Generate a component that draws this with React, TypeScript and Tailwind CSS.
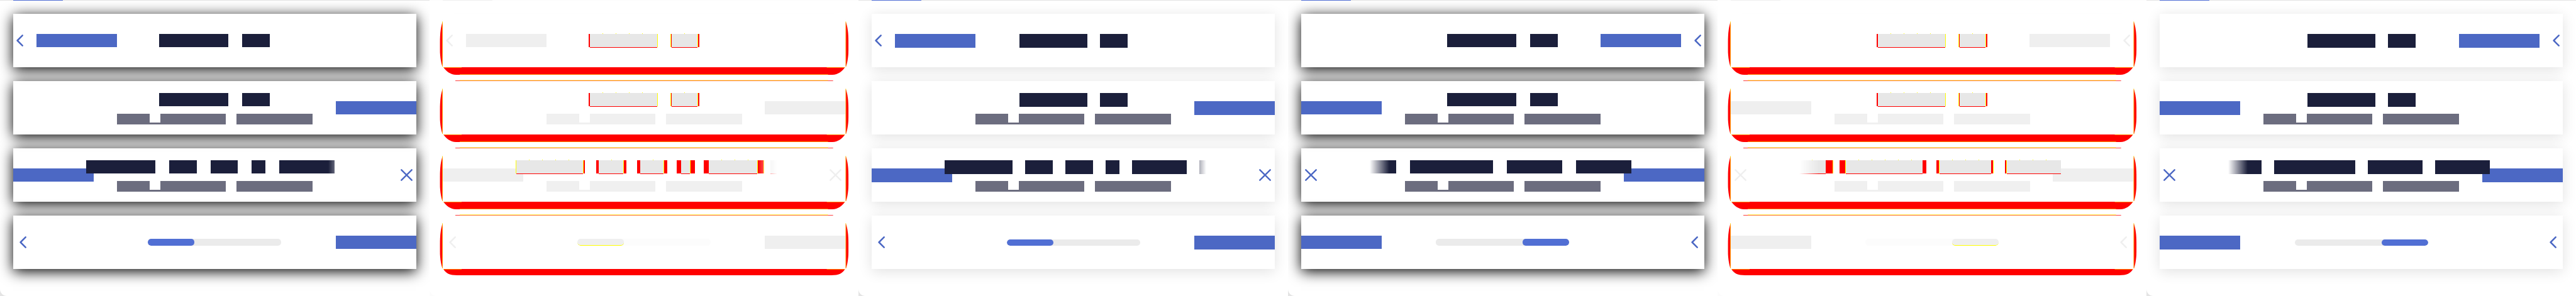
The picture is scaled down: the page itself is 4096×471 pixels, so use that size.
import React from "react";

type Kind = "ink" | "gap" | "red" | "yellow";
type Part = [Kind, number];
type Theme = "strong" | "delta" | "soft";
type Dir = "ltr" | "rtl";

interface Palette {
  ink: string;
  action: string;
  sub: string;
  icon: string;
  fill: string;
  track: string;
  card: string;
  rule: string;
  tab: string;
  corner: string;
}

const palettes: Record<Theme, Palette> = {
  strong: {
    ink: "bg-[#1b1f3b] h-[21px]",
    action: "bg-[#4c68c4] h-[21px]",
    sub: "bg-[#6c6d7f]",
    icon: "text-[#4c68c4]",
    fill: "bg-[#516fd4]",
    track: "bg-[#ebebeb] h-[11px]",
    card: "bg-white/75 shadow-[0_4px_21px_#000000]",
    rule: "bg-[#e4e4e4]",
    tab: "bg-[#516fd4]",
    corner: "bg-[#e4e4e4]",
  },
  delta: {
    ink: "bg-[#e7e7e7] h-[22px] border-b border-[#ff0000]",
    action: "bg-[#efefef] h-[21px]",
    sub: "bg-[#f0f0f0]",
    icon: "text-[#efefef]",
    fill: "bg-[#efefef] border-b border-[#ffff00]",
    track: "bg-[#fcfcfc] h-[11px]",
    card: "bg-white shadow-[0_4px_21px_rgba(0,0,0,0.01)]",
    rule: "bg-[#fcfcfc]",
    tab: "bg-[#efefef]",
    corner: "bg-[#fcfcfc]",
  },
  soft: {
    ink: "bg-[#1b1f3b] h-[22px]",
    action: "bg-[#4c68c4] h-[22px]",
    sub: "bg-[#6c6d7f]",
    icon: "text-[#4c68c4]",
    fill: "bg-[#516fd4]",
    track: "bg-[#ebebeb] h-[10px]",
    card: "bg-white shadow-[0_4px_21px_rgba(0,0,0,0.12)]",
    rule: "bg-[#e4e4e4]",
    tab: "bg-[#516fd4]",
    corner: "bg-[#e4e4e4]",
  },
};

const shortTitle: Record<Theme, Part[]> = {
  strong: [["ink", 110], ["gap", 22], ["ink", 44]],
  delta: [["red", 2], ["ink", 107], ["yellow", 1], ["gap", 20], ["yellow", 1], ["red", 1], ["ink", 41], ["yellow", 1], ["red", 2]],
  soft: [["ink", 108], ["gap", 20], ["ink", 44]],
};

const longTitle: Record<Dir, Record<Theme, Part[]>> = {
  ltr: {
    strong: [["ink", 110], ["gap", 22], ["ink", 44], ["gap", 22], ["ink", 43], ["gap", 22], ["ink", 22], ["gap", 22], ["ink", 88]],
    delta: [
      ["yellow", 1], ["ink", 106], ["yellow", 1], ["red", 2], ["gap", 18],
      ["red", 4], ["ink", 39], ["yellow", 1], ["red", 4], ["gap", 17],
      ["red", 5], ["ink", 37], ["yellow", 1], ["red", 5], ["gap", 15],
      ["red", 7], ["ink", 14], ["yellow", 1], ["red", 7], ["gap", 14],
      ["red", 8], ["ink", 77], ["yellow", 1], ["red", 9], ["yellow", 1], ["gap", 10], ["ink", 11],
    ],
    soft: [["ink", 108], ["gap", 20], ["ink", 44], ["gap", 20], ["ink", 44], ["gap", 20], ["ink", 22], ["gap", 20], ["ink", 87], ["gap", 20], ["ink", 11]],
  },
  rtl: {
    strong: [["ink", 42], ["gap", 22], ["ink", 132], ["gap", 22], ["ink", 88], ["gap", 22], ["ink", 88]],
    delta: [
      ["ink", 42], ["red", 11], ["yellow", 1], ["gap", 10],
      ["red", 9], ["yellow", 1], ["ink", 122], ["red", 6], ["gap", 16],
      ["red", 4], ["yellow", 1], ["ink", 82], ["red", 3], ["yellow", 1], ["gap", 18],
      ["red", 2], ["yellow", 1], ["ink", 86],
    ],
    soft: [["ink", 53], ["gap", 20], ["ink", 129], ["gap", 20], ["ink", 87], ["gap", 20], ["ink", 87]],
  },
};

function Title({ parts, theme }: { parts: Part[]; theme: Theme }) {
  const colors: Record<Kind, string> = {
    ink: palettes[theme].ink,
    gap: "h-[21px]",
    red: "h-[21px] bg-[#ff0000]",
    yellow: "h-[21px] bg-[#ffff00]",
  };
  return (
    <div className="flex items-start">
      {parts.map(([kind, width], i) => (
        <span key={i} className={`relative block shrink-0 ${colors[kind]}`} style={{ width }}>
          {theme === "delta" && kind === "ink" && width > 30 && (
            <span className="absolute -top-px left-0 right-[3px] h-px bg-[repeating-linear-gradient(90deg,transparent_0_20px,#ffff00_20px_21px)]" />
          )}
        </span>
      ))}
    </div>
  );
}

function Subtitle({ theme }: { theme: Theme }) {
  const sub = palettes[theme].sub;
  return (
    <div className="flex h-[17px] items-end">
      <span className={`h-full w-[52px] ${sub}`} />
      <span className={`h-[3px] w-[17px] ${sub}`} />
      <span className={`h-full w-[104px] ${sub}`} />
      <span className="w-[17px]" />
      <span className={`h-full w-[121px] ${sub}`} />
    </div>
  );
}

function Action({ theme }: { theme: Theme }) {
  return <button type="button" aria-label="Action" className={`block w-32 shrink-0 ${palettes[theme].action}`} />;
}

function Chevron({ theme }: { theme: Theme }) {
  return (
    <button type="button" aria-label="Back" className={`block shrink-0 ${palettes[theme].icon}`}>
      <svg width="11" height="19" viewBox="0 0 11 19" fill="none" stroke="currentColor" strokeWidth="2.5" strokeLinecap="round" strokeLinejoin="round">
        <path d="M9.7 1.4 1.6 9.5l8.1 8.1" />
      </svg>
    </button>
  );
}

function Cross({ theme }: { theme: Theme }) {
  return (
    <button type="button" aria-label="Close" className={`block shrink-0 ${palettes[theme].icon}`}>
      <svg width="19" height="19" viewBox="0 0 19 19" fill="none" stroke="currentColor" strokeWidth="2.4" strokeLinecap="round">
        <path d="m1.3 1.3 16.4 16.4M17.7 1.3 1.3 17.7" />
      </svg>
    </button>
  );
}

function EdgeMarks({ first, last }: { first: boolean; last: boolean }) {
  return (
    <svg aria-hidden="true" className="pointer-events-none absolute inset-0 h-full w-full overflow-visible" viewBox="0 0 640 85" preserveAspectRatio="none">
      <g fill="#ff0000">
        <path d="M0 12C-3 20-4.4 30-4.4 45V58C-4.4 70-2 80-.5 84L0 84Z" />
        <path d="M640 12c3 8 4.4 18 4.4 33v13c0 12-2.4 22-3.9 26l-.5 0Z" />
        {last ? (
          <path d="M1 85C5 92 11 95 23 95H617C629 95 635 92 639 85Z" />
        ) : (
          <path d="M1 85C6 92 12 96.5 21 97H619C628 96.5 634 92 639 85Z" />
        )}
        {!first && <path d="M20-.7H620V0H20Z" />}
      </g>
      <g fill="#ffff00">
        <path d="M-.6 12H0V84H-.6ZM640 12h.6v72h-.6ZM1 85H30v.6H1ZM610 85h29v.6h-29Z" />
        {!last && <path d="M27 96.4H612V97H27Z" />}
        {!first && <path d="M27-1.4H612V-.7H27Z" />}
      </g>
    </svg>
  );
}

interface CardProps {
  theme: Theme;
  index: number;
  start?: React.ReactNode;
  end?: React.ReactNode;
  children: React.ReactNode;
}

function Card({ theme, index, start, end, children }: CardProps) {
  return (
    <header className={`relative grid h-[85px] grid-cols-1 grid-rows-1 ${palettes[theme].card}`}>
      {theme === "delta" && <EdgeMarks first={index === 0} last={index === 3} />}
      <div className="col-start-1 row-start-1 flex items-center justify-between">
        <div className="flex items-center">{start}</div>
        <div className="flex items-center">{end}</div>
      </div>
      <div className="pointer-events-none relative col-start-1 row-start-1 flex flex-col items-center">{children}</div>
    </header>
  );
}

function Panel({ theme, dir }: { theme: Theme; dir: Dir }) {
  const p = palettes[theme];
  const rtl = dir === "rtl";
  const action = <Action theme={theme} />;
  const chevron = <Chevron theme={theme} />;
  return (
    <div className={`min-w-0 flex-1 ${p.corner}`}>
      <section className="flex h-full flex-col overflow-hidden rounded-bl-[11px] bg-white">
        <div className={`relative h-px px-[21px] ${p.rule}`}>
          <div className={`h-px w-[79px] ${p.tab}`} />
        </div>
        <div className="flex flex-col gap-[22px] px-[21px] pt-[21px] pb-[43px]">
          <Card
            theme={theme}
            index={0}
            start={!rtl && <div className="flex items-center gap-[21px] pl-[5px]">{chevron}{action}</div>}
            end={rtl && <div className="flex items-center gap-[21px] pr-[5px]">{action}{chevron}</div>}
          >
            <div className="pt-8">
              <Title parts={shortTitle[theme]} theme={theme} />
            </div>
          </Card>
          <Card theme={theme} index={1} start={rtl && action} end={!rtl && action}>
            <div className="flex h-[52px] flex-col items-center pt-[19px]">
              <Title parts={shortTitle[theme]} theme={theme} />
            </div>
            <Subtitle theme={theme} />
          </Card>
          <Card
            theme={theme}
            index={2}
            start={rtl ? <div className="pl-[6px]"><Cross theme={theme} /></div> : action}
            end={rtl ? action : <div className="pr-[6px]"><Cross theme={theme} /></div>}
          >
            <div
              className={
                rtl
                  ? "flex h-[52px] w-[423px] justify-end pt-[19px] pr-[7px] [mask-image:linear-gradient(to_right,transparent,black_31px)]"
                  : "flex h-[52px] w-[423px] justify-start pt-[19px] pl-[7px] [mask-image:linear-gradient(to_left,transparent,black_31px)]"
              }
            >
              <Title parts={longTitle[dir][theme]} theme={theme} />
            </div>
            <Subtitle theme={theme} />
          </Card>
          <Card
            theme={theme}
            index={3}
            start={rtl ? action : <div className="pl-[10px]">{chevron}</div>}
            end={rtl ? <div className="pr-[10px]">{chevron}</div> : action}
          >
            <div
              role="progressbar"
              aria-label="Progress"
              aria-valuenow={35}
              className={`my-auto flex w-[212px] overflow-hidden rounded-[5px] ${p.track} ${rtl ? "justify-end" : "justify-start"}`}
            >
              <div className={`h-full w-[74px] rounded-[5px] ${p.fill}`} />
            </div>
          </Card>
        </div>
      </section>
    </div>
  );
}

const panels: { theme: Theme; dir: Dir }[] = [
  { theme: "strong", dir: "ltr" },
  { theme: "delta", dir: "ltr" },
  { theme: "soft", dir: "ltr" },
  { theme: "strong", dir: "rtl" },
  { theme: "delta", dir: "rtl" },
  { theme: "soft", dir: "rtl" },
];

export default function App() {
  return (
    <main className="flex min-h-screen w-full bg-white">
      {panels.map(({ theme, dir }) => (
        <Panel key={`${theme}-${dir}`} theme={theme} dir={dir} />
      ))}
    </main>
  );
}
